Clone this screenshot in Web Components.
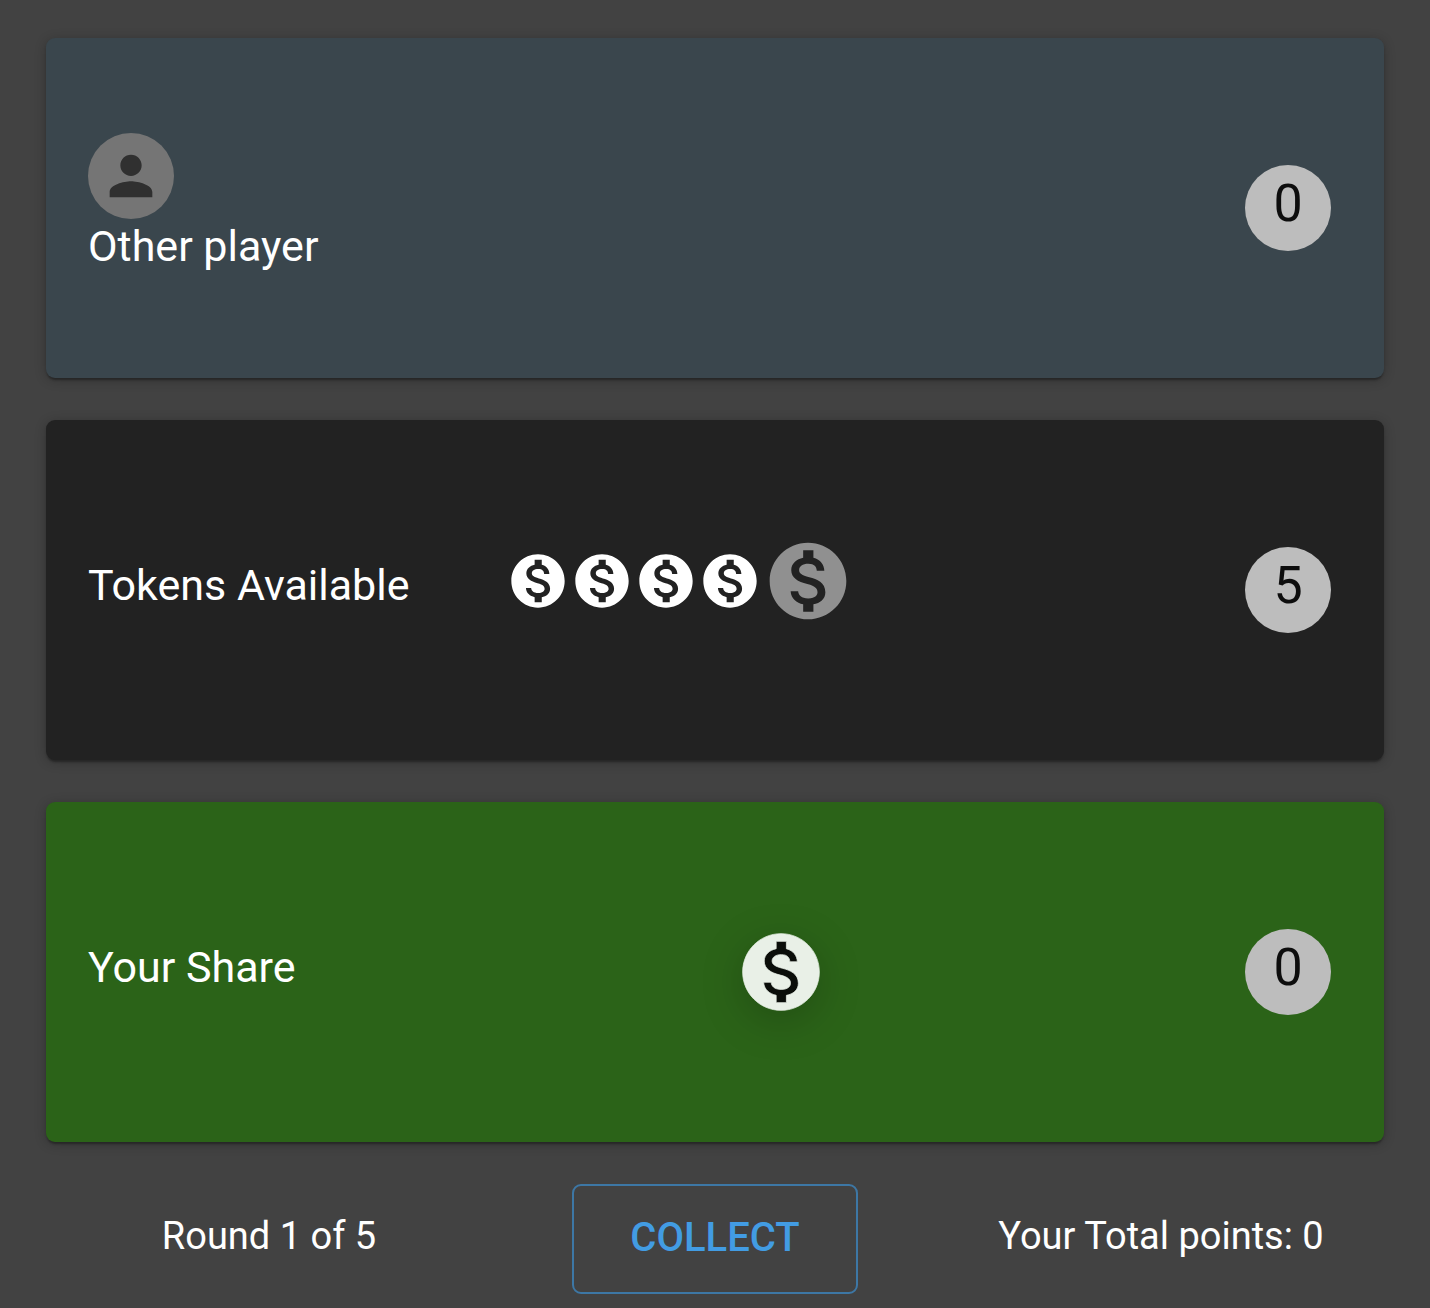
<!DOCTYPE html>
<html lang="en">
<head>
<meta charset="utf-8">
<title>Token sharing game</title>
<style>
  html { background: #424242; }
  body { margin: 0; font-family: Roboto, "Liberation Sans", sans-serif; color: #fff; }
</style>
</head>
<body>
<token-game></token-game>

<script>
const attach = (el, html) => { el.attachShadow({ mode: "open" }).innerHTML = html; };

/* Round count badge */
customElements.define("count-badge", class extends HTMLElement {
  constructor() {
    super();
    attach(this, `
      <style>
        :host { display: flex; align-items: center; justify-content: center; box-sizing: border-box;
          width: 86px; height: 86px; padding-bottom: 8px; border-radius: 50%;
          background: #bdbdbd; color: #0d0d0d; font-size: 52px; line-height: 60px; }
      </style>
      <slot></slot>`);
  }
});

/* Player avatar */
customElements.define("player-avatar", class extends HTMLElement {
  constructor() {
    super();
    attach(this, `
      <style>
        :host { display: flex; align-items: center; justify-content: center;
          width: 86px; height: 86px; border-radius: 50%; background: #757575; }
        svg { width: 64px; height: 64px; fill: #303030; }
      </style>
      <svg viewBox="0 0 24 24" aria-hidden="true"><path d="M12 12c2.21 0 4-1.79 4-4s-1.79-4-4-4-4 1.79-4 4 1.79 4 4 4zm0 2c-2.67 0-8 1.34-8 4v2h16v-2c0-2.66-5.33-4-8-4z"/></svg>`);
  }
});

customElements.define("game-token", class extends HTMLElement {
  constructor() {
    super();
    attach(this, `
      <style>
        :host { display: block; flex: none; width: 64px; height: 64px; color: #fff; --mark: #222; }
        :host([large]) { width: 92px; height: 92px; }
        :host([ghost]) { color: #909090; }
        :host([raised]) { color: #e9f0e7; --mark: #0b0e0a; }
        :host([raised]) svg { filter: drop-shadow(0 10px 20px rgba(0, 0, 0, .2)); }
        :host([raised]) path { stroke: currentColor; stroke-width: .2; }
        svg { display: block; width: 100%; height: 100%; fill: currentColor; overflow: visible; }
        circle { fill: var(--mark); }
      </style>
      <svg viewBox="0 0 24 24" aria-hidden="true"><circle cx="12" cy="12" r="9"/><path d="M12 2C6.48 2 2 6.48 2 12s4.48 10 10 10 10-4.48 10-10S17.52 2 12 2zm1.41 16.09V20h-2.67v-1.93c-1.71-.36-3.16-1.46-3.27-3.4h1.96c.1 1.05.82 1.87 2.65 1.87 1.96 0 2.4-.98 2.4-1.59 0-.83-.44-1.61-2.67-2.14-2.48-.6-4.18-1.62-4.18-3.67 0-1.72 1.39-2.84 3.11-3.21V4h2.67v1.95c1.86.45 2.79 1.86 2.85 3.39H14.3c-.05-1.11-.64-1.87-2.22-1.87-1.5 0-2.4.68-2.4 1.64 0 .84.65 1.39 2.67 1.91s4.18 1.39 4.18 3.91c-.01 1.83-1.38 2.83-3.12 3.16z"/></svg>`);
  }
});

/* Card with three columns: label, tokens, count */
customElements.define("share-card", class extends HTMLElement {
  constructor() {
    super();
    attach(this, `
      <style>
        :host { display: grid; grid-template-columns: repeat(3, 1fr); align-items: center;
          box-sizing: border-box; min-height: 340px; padding: 42px; border-radius: 9px;
          background: var(--card, #222);
          box-shadow: 0 4px 2px -2px rgba(0,0,0,.2), 0 2px 2px rgba(0,0,0,.14), 0 2px 12px rgba(0,0,0,.24); }
        .label { font-size: 43px; line-height: 54px; padding-bottom: 10px; }
        .tokens { display: flex; align-items: center; }
        .count { display: flex; justify-content: flex-end; padding-right: 11px; }
      </style>
      <div class="label"><slot name="avatar"></slot><slot></slot></div>
      <div class="tokens"><slot name="tokens"></slot></div>
      <div class="count"><slot name="count"></slot></div>`);
  }
});

customElements.define("collect-button", class extends HTMLElement {
  constructor() {
    super();
    attach(this, `
      <style>
        :host { display: block; }
        button { display: block; height: 110px; padding: 0 56px 2px; border: 2px solid #3d77a5; border-radius: 9px;
          background: transparent; color: #429ce3; font: 500 40px/64px Roboto, "Liberation Sans", sans-serif;
          text-transform: uppercase; cursor: pointer; }
        button:hover { background: rgba(66, 156, 227, .08); }
      </style>
      <button type="button"><slot></slot></button>`);
  }
});

customElements.define("token-game", class extends HTMLElement {
  constructor() {
    super();
    attach(this, `
      <style>
        :host { display: block; padding: 38px 46px 12px; }
        main { display: flex; flex-direction: column; gap: 42px; }
        .other { --card: #3a464d; }
        .pool { --card: #222; }
        .mine { --card: #2b6318; }
        .pile { display: flex; align-items: center; padding-bottom: 18px; }
        .hand { display: flex; flex: 1; justify-content: flex-end; padding-right: 97px; }
        footer { display: grid; grid-template-columns: repeat(3, 1fr); align-items: center;
          justify-items: center; font-size: 38px; line-height: 56px; }
        footer span { padding-bottom: 6px; }
      </style>
      <main>
        <share-card class="other">
          <player-avatar slot="avatar"></player-avatar>Other player
          <count-badge slot="count">0</count-badge>
        </share-card>
        <share-card class="pool">
          Tokens Available
          <div class="pile" slot="tokens">
            <game-token></game-token><game-token></game-token><game-token></game-token><game-token></game-token><game-token large ghost></game-token>
          </div>
          <count-badge slot="count">5</count-badge>
        </share-card>
        <share-card class="mine">
          Your Share
          <div class="hand" slot="tokens"><game-token large raised></game-token></div>
          <count-badge slot="count">0</count-badge>
        </share-card>
        <footer>
          <span>Round 1 of 5</span>
          <collect-button>Collect</collect-button>
          <span>Your Total points: 0</span>
        </footer>
      </main>`);
  }
});
</script>
</body>
</html>
